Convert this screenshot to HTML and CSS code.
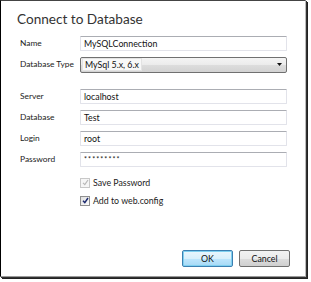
FILE: index.html
```html
<!DOCTYPE html>
<html>
<head>
<meta charset="utf-8">
<link rel="stylesheet" href="styles.css">
</head>
<body>
<div class="window">
  <h1 class="title">Connect to Database</h1>
  <div class="form">
    <div class="row"><span class="label">Name</span><div class="input">MySQLConnection</div></div>
    <div class="row"><span class="label">Database Type</span><div class="select"><span>MySql 5.x, 6.x</span><svg class="arrow" width="5" height="3" viewBox="0 0 5 3"><path d="M0 0H5L2.5 3Z" fill="#111"/></svg></div></div>
    <div class="row gap-top"><span class="label">Server</span><div class="input">localhost</div></div>
    <div class="row"><span class="label">Database</span><div class="input">Test</div></div>
    <div class="row"><span class="label">Login</span><div class="input">root</div></div>
    <div class="row"><span class="label">Password</span><div class="input pw">*********</div></div>
  </div>
  <div class="checks">
    <div class="check disabled"><span class="box"><svg width="7" height="7" viewBox="0 0 7 7"><path d="M1 3.8L2.8 5.6L6 1" fill="none" stroke="#b8b8b8" stroke-width="1.2"/></svg></span><span class="ctext">Save Password</span></div>
    <div class="check"><span class="box"><svg width="7" height="7" viewBox="0 0 7 7"><path d="M1 3.8L2.8 5.6L6 1" fill="none" stroke="#1c2a6e" stroke-width="1.5"/></svg></span><span class="ctext">Add to web.config</span></div>
  </div>
  <div class="buttons">
    <div class="btn default">OK</div>
    <div class="btn">Cancel</div>
  </div>
</div>
</body>
</html>
```
FILE: styles.css
```css
html, body {
  margin: 0;
  padding: 0;
  background: #fff;
}
body {
  width: 311px;
  height: 282px;
  overflow: hidden;
  font-family: Lato, "Open Sans", sans-serif;
  color: #1a1a1a;
}
.window {
  box-sizing: border-box;
  width: 306px;
  height: 277px;
  border-left: 1px solid #000;
  border-top: 1px solid #444;
  border-right: 1px solid #bdbdbd;
  border-bottom: 1px solid #9a9a9a;
  box-shadow: 1px 1px 0 #333, 2px 2px 0 #222;
  display: flex;
  flex-direction: column;
}
.title {
  margin: 9px 0 0 16px;
  font-size: 13.6px;
  font-weight: 400;
  line-height: 18px;
  color: #333;
}
.form {
  margin: 8px 0 0 19px;
  display: flex;
  flex-direction: column;
  gap: 6px;
}
.row {
  display: flex;
  align-items: center;
  height: 15px;
}
.row.gap-top {
  margin-top: 11px;
}
.label {
  width: 60px;
  font-size: 8.4px;
  line-height: 15px;
  color: #222;
  white-space: nowrap;
}
.input {
  box-sizing: border-box;
  width: 207px;
  height: 15px;
  border: 1px solid #e2e3ea;
  border-top-color: #abadb3;
  border-radius: 1px;
  font-size: 8.8px;
  line-height: 13px;
  padding-left: 3px;
  color: #111;
}
.input.pw {
  font-size: 7px;
  letter-spacing: 1.1px;
}
.select {
  box-sizing: border-box;
  width: 207px;
  height: 16px;
  border: 1px solid #707070;
  border-radius: 2px;
  background: linear-gradient(#f4f4f4 0%, #ebebeb 50%, #dddddd 51%, #d2d2d2 100%);
  display: flex;
  align-items: center;
  justify-content: space-between;
  padding: 0 4px 0 3px;
  font-size: 8.8px;
  color: #111;
}
.select span {
  background: #f8f8f8;
  border: 1px solid #e3e3e3;
  padding: 0 2px;
  margin-left: -2px;
  line-height: 11px;
}
.checks {
  margin: 10px 0 0 79px;
  display: flex;
  flex-direction: column;
  gap: 7px;
}
.check {
  display: flex;
  align-items: center;
  height: 11px;
  gap: 3px;
}
.box {
  box-sizing: border-box;
  width: 10px;
  height: 10px;
  border: 1px solid #8f8f8f;
  background: linear-gradient(135deg, #e0e0e0, #fbfbfb);
  display: flex;
  align-items: center;
  justify-content: center;
}
.check.disabled .box {
  border-color: #c8c8c8;
  background: #f6f6f6;
}
.ctext {
  font-size: 8.8px;
  line-height: 11px;
  color: #222;
}
.buttons {
  margin-top: auto;
  margin-bottom: 9px;
  align-self: flex-end;
  margin-right: 15px;
  display: flex;
  gap: 6px;
}
.btn {
  box-sizing: border-box;
  width: 51px;
  height: 17px;
  border: 1px solid #707070;
  border-radius: 2px;
  background: linear-gradient(#f2f2f2 0%, #ebebeb 50%, #dddddd 51%, #cfcfcf 100%);
  font-size: 8.8px;
  line-height: 15px;
  text-align: center;
  color: #111;
}
.btn.default {
  border-color: #3c7fb1;
  box-shadow: inset 0 0 0 1px #7fd0f0;
  background: linear-gradient(#eaf6fd 0%, #d9f0fc 50%, #bee6fd 51%, #a7d9f5 100%);
}
```
